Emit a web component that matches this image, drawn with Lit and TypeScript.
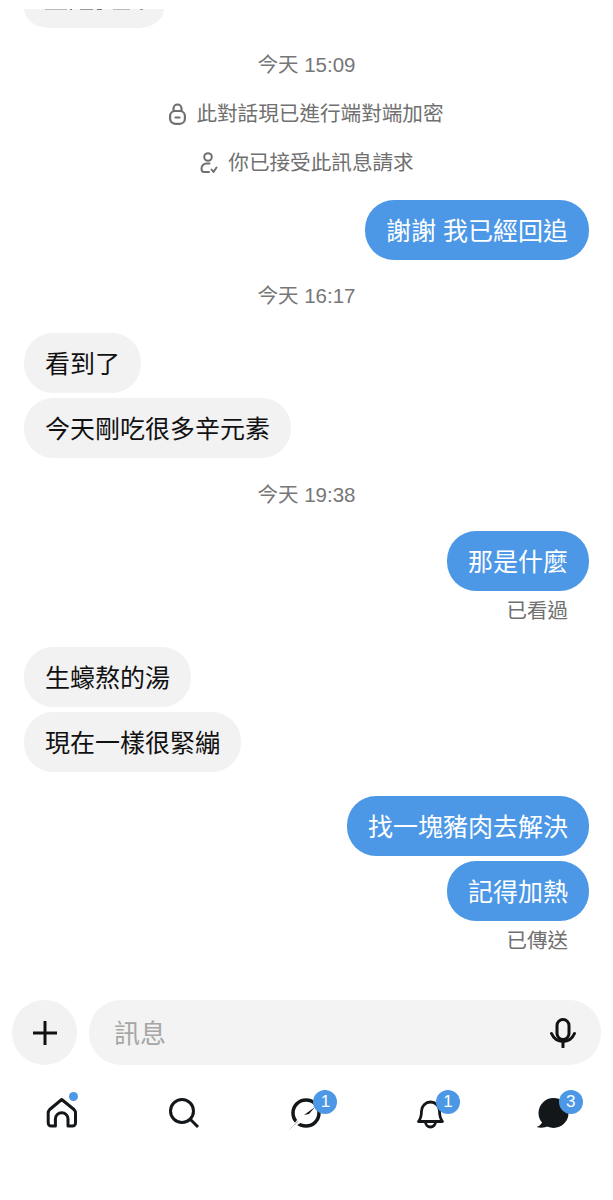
import { LitElement, css, html } from "lit";
import { customElement } from "lit/decorators.js";

const row = (side: string, text: string, gap: string) =>
  html`<div class="bubble ${side} ${gap}">${text}</div>`;

@customElement("app-root")
export class AppRoot extends LitElement {
  static styles = css`
    :host {
      display: block;
      width: 613px;
      height: 1200px;
      overflow: hidden;
      background: #fff;
      font-family: "Liberation Sans", "Noto Sans CJK TC", sans-serif;
    }
    .page {
      height: 1200px;
      display: flex;
      flex-direction: column;
    }
    .chat {
      height: 1000px;
      box-sizing: border-box;
      padding-top: 9px;
      display: flex;
      flex-direction: column;
      overflow: hidden;
    }
    .g5 {
      margin-top: 5px;
    }
    .g6 {
      margin-top: 6px;
    }
    .g21 {
      margin-top: 21px;
    }
    .g22 {
      margin-top: 22px;
    }
    .g23 {
      margin-top: 23px;
    }
    .g24 {
      margin-top: 24px;
    }
    .clip {
      width: 140px;
      height: 19px;
      margin-left: 24px;
      background: #f2f2f2;
      border-radius: 0 0 26px 26px / 0 0 19px 19px;
      flex: none;
    }
    /* bottoms of the cut-off message text */
    .marks {
      height: 1px;
      margin: 0 21px;
      background: linear-gradient(
        90deg,
        #bbb 0 22px,
        transparent 22px 25px,
        #777 25px 27px,
        transparent 27px 35px,
        #999 35px 48px,
        transparent 48px 52px,
        #777 52px 57px,
        transparent 57px 68px,
        #bbb 68px 85px,
        transparent 85px 95px,
        #999 95px 98px,
        transparent 98px
      );
    }
    .time {
      text-align: center;
      color: #777;
      font-size: 20.5px;
      line-height: 28px;
    }
    .note {
      display: flex;
      justify-content: center;
      align-items: center;
      gap: 10px;
      color: #707070;
      font-size: 20.6px;
      line-height: 28px;
    }
    .note svg {
      flex: none;
    }
    .bubble {
      flex: none;
      height: 60px;
      box-sizing: border-box;
      padding: 0 21px;
      border-radius: 29px;
      font-size: 25px;
      line-height: 62px;
      white-space: nowrap;
    }
    .in {
      align-self: flex-start;
      margin-left: 24px;
      background: #f2f2f2;
      color: #111;
    }
    .out {
      align-self: flex-end;
      margin-right: 24px;
      background: #4c98e6;
      color: #fff;
    }
    .status {
      align-self: flex-end;
      margin-right: 45px;
      color: #707070;
      font-size: 20.5px;
      line-height: 28px;
    }
    .composer {
      display: flex;
      gap: 12px;
      padding: 0 12px;
      height: 65px;
      flex: none;
    }
    .plus {
      width: 65px;
      height: 65px;
      flex: none;
      border-radius: 50%;
      background: #f2f2f2;
      display: flex;
      align-items: center;
      justify-content: center;
    }
    .input {
      flex: 1;
      display: flex;
      align-items: center;
      justify-content: space-between;
      padding: 0 25px;
      background: #f3f3f3;
      border-radius: 32px;
      color: #a6a6a6;
      font-size: 26px;
    }
    .input span {
      padding-bottom: 3px;
    }
    .tabs {
      display: grid;
      grid-template-columns: repeat(5, 1fr);
      margin-top: 31px;
    }
    .tab {
      height: 50px;
      display: flex;
      justify-content: center;
    }
    .ic {
      position: relative;
      width: 34px;
      height: 34px;
    }
    .ic svg {
      overflow: visible;
    }
    .dot {
      position: absolute;
      left: 25px;
      top: -4px;
      width: 9px;
      height: 9px;
      border-radius: 50%;
      background: #4c98e6;
    }
    .badge {
      position: absolute;
      left: 24px;
      top: -6px;
      width: 24px;
      height: 24px;
      border-radius: 50%;
      background: #4c98e6;
      color: #fff;
      font-size: 17px;
      line-height: 23px;
      text-align: center;
    }
  `;

  render() {
    return html`<div class="page">
      <div class="chat">
        <div class="clip"><div class="marks"></div></div>
        <div class="time g23">今天 15:09</div>
        <div class="note g21">
          <svg width="17" height="22" viewBox="0 0 17 22" fill="none" stroke="#707070" stroke-width="2.2">
            <rect x="1.100" y="8" width="14.800" height="12.800" rx="5"></rect>
            <path d="M4.500 8.500V5.500a4 4 0 0 1 8 0v3"></path>
            <path d="M6.500 14.500h4" stroke-linecap="round"></path>
          </svg>
          <span>此對話現已進行端對端加密</span>
        </div>
        <div class="note g21">
          <svg width="19" height="22" viewBox="0 0 19 22" fill="none" stroke="#707070" stroke-width="2" stroke-linecap="round" stroke-linejoin="round">
            <circle cx="9" cy="5" r="3.800"></circle>
            <path d="M10.500 11.500H7.500a5 5 0 0 0-5 5c0 1 .3 3.500 2.500 3.500H10"></path>
            <path d="M12.500 17.500l2 2.500 3-4.500"></path>
          </svg>
          <span>你已接受此訊息請求</span>
        </div>
        ${row("out", "謝謝 我已經回追", "g23")}
        <div class="time g22">今天 16:17</div>
        ${row("in", "看到了", "g23")} ${row("in", "今天剛吃很多辛元素", "g5")}
        <div class="time g23">今天 19:38</div>
        ${row("out", "那是什麼", "g22")}
        <div class="status g6">已看過</div>
        ${row("in", "生蠔熬的湯", "g22")} ${row("in", "現在一樣很緊繃", "g5")}
        ${row("out", "找一塊豬肉去解決", "g24")} ${row("out", "記得加熱", "g5")}
        <div class="status g6">已傳送</div>
      </div>
      <div class="composer">
        <div class="plus">
          <svg width="26" height="26" viewBox="0 0 26 26" stroke="#111" stroke-width="3">
            <path d="M13 1v24M1 13h24"></path>
          </svg>
        </div>
        <div class="input">
          <span>訊息</span>
          <svg width="26" height="30" viewBox="0 0 26 30" fill="none" stroke="#111" stroke-width="3" stroke-linecap="round">
            <rect x="7" y="1.500" width="12" height="20" rx="6"></rect>
            <path d="M1.500 15.500c2 4.500 6 8 11.500 8s9.500-3.500 11.500-8M13 24v5"></path>
          </svg>
        </div>
      </div>
      <div class="tabs">
        <div class="tab">
          <div class="ic">
            <svg width="34" height="34" viewBox="0 0 34 34" fill="none" stroke="#14171a" stroke-width="3" stroke-linejoin="round">
              <path d="M17.700 3.500L30 13.500q1.500 1.500 1.500 3.500V27a3 3 0 0 1-3 3H24V23a6.300 6.300 0 0 0-12.600 0v7H7.200a3 3 0 0 1-3-3V17q0-2 1.500-3.500z"></path>
            </svg>
            <span class="dot"></span>
          </div>
        </div>
        <div class="tab">
          <div class="ic">
            <svg width="34" height="34" viewBox="0 0 34 34" fill="none" stroke="#14171a" stroke-width="3">
              <circle cx="15" cy="15" r="11.500"></circle>
              <path d="M23 23l8 8"></path>
            </svg>
          </div>
        </div>
        <div class="tab">
          <div class="ic">
            <svg width="34" height="34" viewBox="0 0 34 34" fill="none">
              <circle cx="17" cy="17" r="13" stroke="#14171a" stroke-width="3.500"></circle>
              <path d="M-1 35L13 18 27 8 19 22z" fill="#fff"></path>
              <path d="M-1 35L9.500 24.500 8.500 26z" fill="#14171a"></path>
              <path d="M15 19L26 11 20 18z" fill="#14171a"></path>
            </svg>
            <span class="badge">1</span>
          </div>
        </div>
        <div class="tab">
          <div class="ic">
            <svg width="34" height="34" viewBox="0 0 34 34" fill="none" stroke="#14171a" stroke-width="2.800" stroke-linejoin="round">
              <path d="M6.500 25.500c2-2.500 3-6 3-10.500a9 9 0 0 1 18 0c0 4.500 1 8 3 10.500z"></path>
              <path d="M13.500 26a5 5 0 0 0 10 0"></path>
            </svg>
            <span class="badge">1</span>
          </div>
        </div>
        <div class="tab">
          <div class="ic">
            <svg width="34" height="34" viewBox="0 0 34 34" fill="#14171a">
              <circle cx="18.500" cy="17" r="15"></circle>
              <path d="M8 24C7.500 27 5 30 1.500 31 5 32 10 32 13 30z"></path>
            </svg>
            <span class="badge">3</span>
          </div>
        </div>
      </div>
    </div>`;
  }
}
